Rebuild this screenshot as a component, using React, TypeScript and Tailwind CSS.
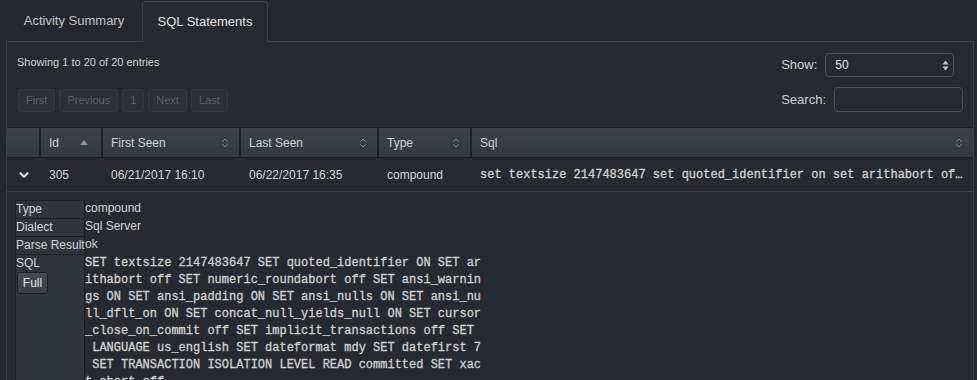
import { ChevronDown, ChevronsUpDown } from "lucide-react";

const sqlLines = [
  "SET textsize 2147483647 SET quoted_identifier ON SET ar",
  "ithabort off SET numeric_roundabort off SET ansi_warnin",
  "gs ON SET ansi_padding ON SET ansi_nulls ON SET ansi_nu",
  "ll_dflt_on ON SET concat_null_yields_null ON SET cursor",
  "_close_on_commit off SET implicit_transactions off SET",
  " LANGUAGE us_english SET dateformat mdy SET datefirst 7",
  " SET TRANSACTION ISOLATION LEVEL READ committed SET xac",
  "t_abort off",
];

const columns = [
  { label: "", width: "w-[34px]", sort: "none" },
  { label: "Id", width: "w-[62px]", sort: "asc" },
  { label: "First Seen", width: "w-[138px]", sort: "both" },
  { label: "Last Seen", width: "w-[138px]", sort: "both" },
  { label: "Type", width: "w-[93px]", sort: "both" },
  { label: "Sql", width: "flex-1", sort: "both" },
];

function PageButton({ label }: { label: string }) {
  return (
    <span className="h-[23px] px-[7px] flex items-center rounded-[3px] border border-[#343941] bg-[#2c3037] text-[11px] text-[#5d626a]">
      {label}
    </span>
  );
}

function DetailRow({ label, children, tall }: { label: React.ReactNode; children: React.ReactNode; tall?: boolean }) {
  return (
    <div className="flex">
      <div
        className={`w-[70px] shrink-0 border border-b-0 border-[#1c1f23] bg-[#30353c] text-[12px] leading-[17px] text-[#d4d4d4] whitespace-nowrap ${tall ? "h-[200px]" : "h-[18px]"}`}
      >
        {label}
      </div>
      <div className="pl-0 text-[12px] leading-[17px] text-[#d4d4d4]">{children}</div>
    </div>
  );
}

export default function App() {
  return (
    <div className="w-[977px] h-[380px] overflow-hidden bg-[#24272d] font-['Liberation_Sans',Arial,sans-serif] text-[#d4d4d4]">
      {/* tabs */}
      <div className="flex items-end h-[41px] pl-[6px]">
        <div className="h-[40px] w-[136px] flex items-center justify-center text-[13px] text-[#c4c4c4]">
          Activity Summary
        </div>
        <div className="relative z-10 -mb-px h-[41px] w-[126px] flex items-center justify-center rounded-t-[4px] border border-b-0 border-[#3b4047] bg-[#272b31] text-[13px] text-[#e2e2e2]">
          SQL Statements
        </div>
      </div>

      {/* panel */}
      <div className="ml-[6px] w-[968px] h-[339px] border border-b-0 border-[#3b4047] bg-[#272b31]">
        <div className="flex justify-between h-[85px] pl-[10px] pr-[10px]">
          <div className="flex flex-col">
            <div className="mt-[12px] text-[11px] text-[#d0d0d0]">Showing 1 to 20 of 20 entries</div>
            <div className="mt-[18px] flex gap-[4px] pl-px">
              <PageButton label="First" />
              <PageButton label="Previous" />
              <PageButton label="1" />
              <PageButton label="Next" />
              <PageButton label="Last" />
            </div>
          </div>
          <div className="flex flex-col gap-[10px] pt-[11px]">
            <div className="flex items-center gap-[8px]">
              <span className="text-[13px] text-[#d0d0d0]">Show:</span>
              <div className="relative w-[129px] h-[24px] rounded-[4px] border border-[#4a4f57] bg-[#272b31] flex items-center pl-[9px] text-[12px] text-[#e0e0e0]">
                50
                <svg className="absolute right-[4px] top-[6px]" width="7" height="11" viewBox="0 0 7 11">
                  <path d="M3.5 0.5 L6.5 4.5 L0.5 4.5 Z" fill="#c8c8c8" />
                  <path d="M3.5 10.5 L6.5 6.5 L0.5 6.5 Z" fill="#c8c8c8" />
                </svg>
              </div>
            </div>
            <div className="flex items-center gap-[8px]">
              <span className="text-[13px] text-[#d0d0d0]">Search:</span>
              <div className="w-[129px] h-[25px] rounded-[4px] border border-[#4a4f57] bg-[#272b31]" />
            </div>
          </div>
        </div>

        {/* table header */}
        <div className="flex h-[31px] border-t border-b border-[#1c1f23] bg-gradient-to-b from-[#3e434b] to-[#343840]">
          {columns.map((c, i) => (
            <div
              key={i}
              className={`${c.width} shrink-0 flex items-center justify-between pl-[8px] pr-[8px] border-r-2 border-[#1e2125] text-[12px] text-[#d2d2d2] last:border-r-0`}
            >
              <span>{c.label}</span>
              {c.sort === "asc" && (
                <svg width="8" height="5" viewBox="0 0 8 5" className="mr-[5px]">
                  <path d="M4 0 L8 5 L0 5 Z" fill="#8d9299" />
                </svg>
              )}
              {c.sort === "both" && <ChevronsUpDown size={12} strokeWidth={1.5} className="text-[#9a9fa6]" />}
            </div>
          ))}
        </div>

        {/* row */}
        <div className="flex h-[34px] items-center border-b border-[#3a3f46] text-[12px] text-[#d6d6d6]">
          <div className="w-[34px] shrink-0 flex justify-center">
            <ChevronDown size={14} strokeWidth={4} className="text-[#dcdcdc]" />
          </div>
          <div className="w-[62px] shrink-0 pl-[8px]">305</div>
          <div className="w-[138px] shrink-0 pl-[8px]">06/21/2017 16:10</div>
          <div className="w-[138px] shrink-0 pl-[8px]">06/22/2017 16:35</div>
          <div className="w-[93px] shrink-0 pl-[8px]">compound</div>
          <div className="flex-1 min-w-0 pl-[8px] pr-[9px] truncate font-['Liberation_Mono','Courier_New',monospace] text-[#d0d0d0] [-webkit-text-stroke:0.3px_#d0d0d0]">
            set textsize 2147483647 set quoted_identifier on set arithabort off set numeric_roundabort off
          </div>
        </div>

        {/* detail */}
        <div className="pl-[8px] pt-[8px]">
          <DetailRow label="Type">compound</DetailRow>
          <DetailRow label="Dialect">Sql Server</DetailRow>
          <DetailRow label="Parse Result">ok</DetailRow>
          <DetailRow
            tall
            label={
              <div className="flex flex-col">
                <span>SQL</span>
                <span className="mt-0 ml-px w-[31px] h-[22px] rounded-[3px] border border-[#1c1f23] bg-gradient-to-b from-[#474c54] to-[#3a3e45] flex items-center justify-center text-[12px] text-[#e0e0e0]">
                  Full
                </span>
              </div>
            }
          >
            <div className="font-['Liberation_Mono','Courier_New',monospace] text-[12px] leading-[17px] text-[#d0d0d0] [-webkit-text-stroke:0.3px_#d0d0d0] pt-px">
              {sqlLines.map((l, i) => (
                <div key={i} className="whitespace-pre">
                  {l}
                </div>
              ))}
            </div>
          </DetailRow>
        </div>
      </div>
    </div>
  );
}
